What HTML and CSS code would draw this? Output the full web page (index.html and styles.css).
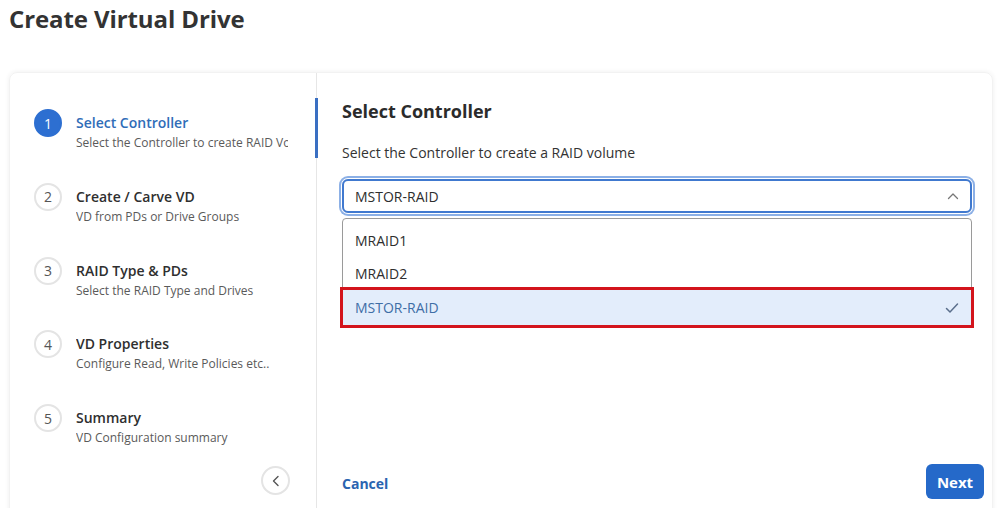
FILE: index.html
```html
<!DOCTYPE html>
<html lang="en">
<head>
<meta charset="utf-8">
<title>Create Virtual Drive</title>
<link rel="stylesheet" href="styles.css">
</head>
<body>
<div class="page">
  <h1 class="page-title">Create Virtual Drive</h1>
  <div class="card">
    <nav class="wizard-nav">
      <ol class="steps">
        <li class="step active">
          <span class="step-num">1</span>
          <div class="step-text">
            <div class="step-title">Select Controller</div>
            <div class="step-sub">Select the Controller to create RAID Volume</div>
          </div>
        </li>
        <li class="step">
          <span class="step-num">2</span>
          <div class="step-text">
            <div class="step-title">Create / Carve VD</div>
            <div class="step-sub">VD from PDs or Drive Groups</div>
          </div>
        </li>
        <li class="step">
          <span class="step-num">3</span>
          <div class="step-text">
            <div class="step-title">RAID Type &amp; PDs</div>
            <div class="step-sub">Select the RAID Type and Drives</div>
          </div>
        </li>
        <li class="step">
          <span class="step-num">4</span>
          <div class="step-text">
            <div class="step-title">VD Properties</div>
            <div class="step-sub">Configure Read, Write Policies etc..</div>
          </div>
        </li>
        <li class="step">
          <span class="step-num">5</span>
          <div class="step-text">
            <div class="step-title">Summary</div>
            <div class="step-sub">VD Configuration summary</div>
          </div>
        </li>
      </ol>
      <button class="collapse-btn" type="button" aria-label="Collapse">
        <svg width="10" height="12" viewBox="0 0 10 12"><path d="M7 1.5 L2.5 6 L7 10.5" fill="none" stroke="#555" stroke-width="1.4" stroke-linecap="round" stroke-linejoin="round"/></svg>
      </button>
    </nav>
    <section class="panel">
      <h2 class="panel-title">Select Controller</h2>
      <p class="panel-desc">Select the Controller to create a RAID volume</p>
      <div class="select-wrap">
        <div class="select">
          <span>MSTOR-RAID</span>
          <svg class="chev" width="12" height="8" viewBox="0 0 12 8"><path d="M1.5 6.5 L6 2 L10.5 6.5" fill="none" stroke="#777" stroke-width="1.3" stroke-linecap="round" stroke-linejoin="round"/></svg>
        </div>
        <ul class="options">
          <li class="option">MRAID1</li>
          <li class="option">MRAID2</li>
          <li class="option selected">
            <span>MSTOR-RAID</span>
            <svg width="14" height="12" viewBox="0 0 14 12"><path d="M1.5 6.5 L5 10 L12.5 2" fill="none" stroke="#5b6f8c" stroke-width="1.5" stroke-linecap="round" stroke-linejoin="round"/></svg>
          </li>
        </ul>
      </div>
      <div class="panel-footer">
        <button class="btn-link" type="button">Cancel</button>
        <button class="btn-primary" type="button">Next</button>
      </div>
    </section>
  </div>
</div>
</body>
</html>
```

FILE: styles.css
```css
* { box-sizing: border-box; }

html, body {
  margin: 0;
  padding: 0;
  background: #fff;
  overflow: hidden;
}

body {
  font-family: "Open Sans", "Noto Sans", Arial, sans-serif;
  color: #333;
}

.page {
  padding: 0 5px 0 9px;
}

.page-title {
  margin: 0;
  padding-top: 2px;
  height: 72px;
  font-size: 24px;
  font-weight: 700;
  color: #333;
  letter-spacing: -0.1px;
}

.card {
  display: grid;
  grid-template-columns: 307px 1fr;
  height: 450px;
  border-radius: 8px;
  box-shadow: 0 0 5px rgba(0, 0, 0, 0.07);
  border: 1px solid #f2f2f2;
}

.wizard-nav {
  display: flex;
  flex-direction: column;
  padding: 25px 0 26px 0;
  border-right: 1px solid #e6e6e6;
}

.steps {
  list-style: none;
  margin: 0;
  padding: 0;
  display: flex;
  flex-direction: column;
  gap: 13.8px;
}

.step {
  display: flex;
  align-items: flex-start;
  gap: 14px;
  height: 60px;
  padding: 11px 0 0 24px;
  border-right: 3px solid transparent;
  margin-right: -2px;
}

.step.active {
  border-right-color: #3a6fc2;
}

.step-num {
  flex: none;
  width: 28px;
  height: 28px;
  border-radius: 50%;
  border: 2px solid #e4e4e4;
  display: flex;
  align-items: center;
  justify-content: center;
  font-size: 14px;
  color: #555;
  background: #fff;
}

.step.active .step-num {
  background: #2d6fd1;
  border-color: #2d6fd1;
  color: #fff;
}

.step-text {
  width: 212px;
  overflow: hidden;
  white-space: nowrap;
  margin-top: 4px;
}

.step-title {
  font-size: 14px;
  line-height: 20px;
  font-weight: 600;
  color: #2f2f2f;
}

.step.active .step-title {
  color: #2f6db8;
}

.step-sub {
  font-size: 12px;
  line-height: 20px;
  color: #5a5a5a;
}

.collapse-btn {
  margin-top: auto;
  align-self: flex-end;
  margin-right: 26px;
  width: 29px;
  height: 29px;
  border-radius: 50%;
  border: 2px solid #e4e4e4;
  background: #fff;
  display: flex;
  align-items: center;
  justify-content: center;
  padding: 0;
}

.panel {
  display: flex;
  flex-direction: column;
  padding: 24px 8px 22px 25px;
}

.panel-title {
  margin: 0;
  font-size: 18px;
  line-height: 28px;
  font-weight: 700;
  color: #2b2b2b;
}

.panel-desc {
  margin: 18px 0 0 0;
  font-size: 14px;
  line-height: 20px;
  color: #333;
}

.select-wrap {
  width: 630px;
  margin-top: 16px;
}

.select {
  height: 34px;
  border: 2px solid #4079cf;
  border-radius: 6px;
  box-shadow: 0 0 0 1px #fff, 0 0 0 3px #8cb0e6;
  display: flex;
  align-items: center;
  justify-content: space-between;
  padding: 0 11px 0 11px;
  font-size: 14px;
  color: #2e2e2e;
}

.options {
  list-style: none;
  margin: 5px 0 0 0;
  padding: 5px 0 3px 0;
  border: 1px solid #9a9a9a;
  border-radius: 4px;
  height: 110px;
}

.option {
  height: 33px;
  display: flex;
  align-items: center;
  justify-content: space-between;
  padding: 0 12px;
  font-size: 14px;
  color: #2e2e2e;
}

.option.selected {
  background: #e3edfb;
  color: #3f6ea6;
  outline: 3px solid #d3141c;
  outline-offset: 0;
  height: 35px;
}

.panel-footer {
  margin-top: auto;
  display: flex;
  align-items: center;
  justify-content: space-between;
}

.btn-link {
  border: 0;
  background: none;
  padding: 0;
  margin-top: 3px;
  font-family: inherit;
  font-size: 14px;
  font-weight: 700;
  color: #2a64b0;
}

.btn-primary {
  border: 0;
  width: 58px;
  height: 35px;
  border-radius: 6px;
  background: #2569c9;
  color: #fff;
  font-family: inherit;
  font-size: 15px;
  font-weight: 700;
  padding: 0;
}
```
